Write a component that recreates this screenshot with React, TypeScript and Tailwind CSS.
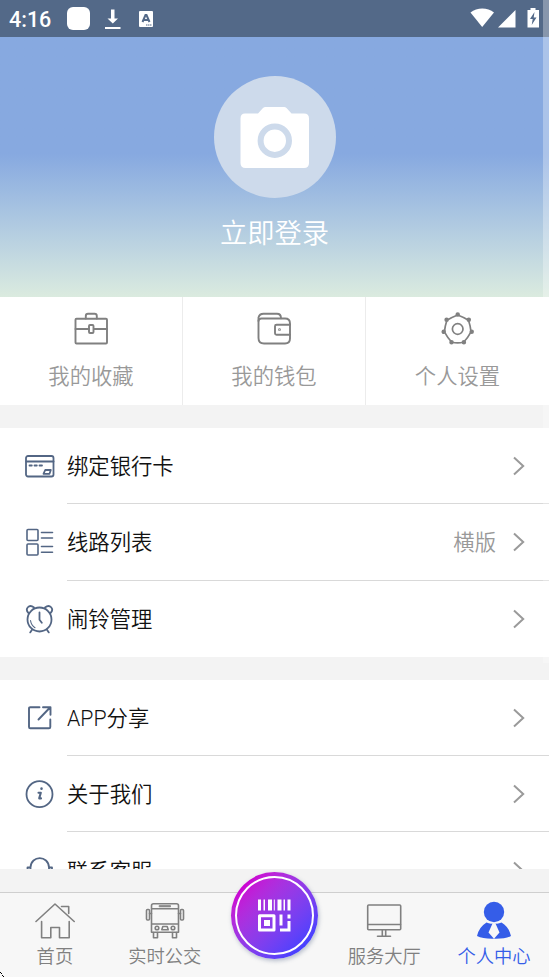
import type { ReactNode } from 'react';

const Svg = ({ w, h, sw = 1.6, children }: { w: number; h: number; sw?: number; children: ReactNode }) => (
  <svg
    width={w}
    height={h}
    viewBox={`0 0 ${w} ${h}`}
    fill="none"
    stroke="currentColor"
    strokeWidth={sw}
    strokeLinejoin="round"
    strokeLinecap="round"
    className="block shrink-0"
  >
    {children}
  </svg>
);

const StatusBar = () => (
  <div className="flex h-[37px] shrink-0 items-center bg-[#536988] text-white">
    <span className="ml-[9px] w-[58px] pt-0.5 font-[Roboto] text-[21.500px] font-medium leading-[35px]">4:16</span>
    <div className="h-[23px] w-[23px] rounded-[6px] bg-white" />
    <svg width="18" height="24" viewBox="0 0 18 24" className="ml-[14px]" fill="currentColor">
      <path d="M7 2.500h3.500v9H14l-5.200 5-5.300-5H7zM1 20h15.500v2H1z" />
    </svg>
    <svg width="16" height="18" viewBox="0 0 16 18" className="ml-4">
      <rect x="1" y="1" width="14" height="16" rx="1" fill="#fff" />
      <path d="M4.500 12L7.500 5h1L11.500 12M5.500 10h5" stroke="#536988" strokeWidth="2" fill="none" />
      <path d="M8 15h5.500" stroke="#536988" strokeDasharray="1.500 0.500" />
    </svg>
    <svg width="70" height="24" viewBox="0 0 70 24" className="ml-auto mr-[9px]" fill="currentColor">
      <path d="M0.500 5.500C7 0.200 17.500 0.200 24 5.500L12.200 20z" />
      <path d="M28 20.500L45.500 3V20.500z" />
      <path d="M57.500 3h3V1h5v2h3.500v17.500H57.500z" />
      <path d="M64.500 5l-4.500 7h2.700l-1 6 4.800-7.500h-2.800z" fill="#536988" />
    </svg>
  </div>
);

const CameraIcon = () => (
  <svg width="70" height="64" viewBox="0 0 70 64">
    <path
      d="M5 8.500H18L23 3Q24 2 25.500 2H44Q45.500 2 46.500 3L51.500 8.500H64Q69 8.500 69 13.500V58Q69 63 64 63H5.500Q0.500 63 0.500 58V13.500Q0.500 8.500 5 8.500z"
      fill="#fff"
    />
    <circle cx="34.800" cy="35.700" r="14.200" fill="none" stroke="#cddaeb" strokeWidth="6" />
  </svg>
);

const BriefcaseIcon = () => (
  <Svg w={36} h={36} sw={1.900}>
    <rect x="2.500" y="7.800" width="31.500" height="24.700" rx="1" />
    <path d="M12.800 7.500V5q0-2.200 2.200-2.200h6.600q2.200 0 2.200 2.200v2.500M2.500 18h13.500M21 18H34" />
    <rect x="16" y="14" width="4.500" height="8" rx="1" />
  </Svg>
);

const WalletIcon = () => (
  <Svg w={36} h={36} sw={1.900}>
    <path d="M2.500 9.500V27q0 5.500 5.500 5.500h21q5 0 5-5V12.500q0-5-5-5H5.500q-3 0-3 2.500z" />
    <path d="M2.500 10V6.500q1-3.700 5-3.700h13.500q4 0 4 4.500M34 13.700H20.500q-1.500 0-1.500 1.500v7q0 1.500 1.500 1.500H34" />
    <circle cx="23.500" cy="18.700" r="0.400" />
  </Svg>
);

const gearPoints = [
  [17.700, 3.500],
  [28.800, 8.800],
  [31.700, 20.800],
  [23.900, 31.300],
  [11.500, 31.300],
  [3.700, 20.800],
  [6.600, 8.800],
];

const GearIcon = () => (
  <Svg w={36} h={36} sw={1.700}>
    <path d="M17.700 4Q23 6 28.500 9.200Q30.500 15 31 20.800Q28 26.500 23.800 31Q17.700 32.800 11.600 31Q7.500 26.500 4.400 20.800Q5 15 6.900 9.200Q12.500 6 17.700 4z" />
    <circle cx="17.700" cy="18" r="5.300" />
    {gearPoints.map(([x, y]) => (
      <circle key={`${x}-${y}`} cx={x} cy={y} r="1.400" fill="currentColor" />
    ))}
  </Svg>
);

const CardIcon = () => (
  <Svg w={30} h={30} sw={1.800}>
    <rect x="1" y="5" width="27.500" height="20.500" rx="2" />
    <path d="M1.500 10.500h27" strokeWidth="1.900" />
    <path d="M4.500 14.500h2.300M9.500 14.500h2.300M14.500 14.500h2.500" />
    <path d="M20.200 19h5.600l-1.300 3.800h-6z" />
  </Svg>
);

const RoutesIcon = () => (
  <Svg w={30} h={30} sw={1.600}>
    <rect x="2" y="2.500" width="11" height="11" rx="1" />
    <rect x="2" y="17" width="11" height="11" rx="1" />
    <path d="M16.500 5.500h11M16.500 11h11M16.500 19.500h11M16.500 25.300h11" />
  </Svg>
);

const AlarmIcon = () => (
  <Svg w={30} h={30} sw={1.800}>
    <circle cx="14.500" cy="15.500" r="12" />
    <path d="M3.500 9C-0.500 5 4 -0.500 9 3.500M20 3.500C25 -0.500 29.500 5 25.500 9M7 25.800l-1.800 2.600M22 25.800l1.800 2.600M14.500 8.500v7.200l2.300 3" />
    <path d="M5.500 16.500q.8 5 4.500 7.200" strokeWidth="1.100" />
  </Svg>
);

const ShareIcon = () => (
  <Svg w={30} h={30} sw={1.900}>
    <path d="M14.500 4.200H5.300q-1.300 0-1.300 1.300v18.500q0 1.300 1.300 1.300h18.700q1.300 0 1.300-1.300V16.500M18 4.200h7.500v7.500M25 4.500L13.500 16.500" />
  </Svg>
);

const InfoIcon = () => (
  <Svg w={30} h={30} sw={1.800}>
    <circle cx="14.500" cy="15.200" r="13" />
    <path d="M16.500 9.500v.3" strokeWidth="2.500" />
    <path d="M13.500 13.800h2.300l-1.600 5.600h1.800" strokeWidth="2.100" />
  </Svg>
);

const HeadsetIcon = () => (
  <Svg w={30} h={30} sw={1.800}>
    <path d="M5.500 14V11.500C6 -1 23.500 -1 24 11.500V14M4.500 11.500H2.500V20h3v-8.500M25 11.500h2V20h-3v-8.500" />
  </Svg>
);

const HomeIcon = () => (
  <Svg w={40} h={40} sw={1.600}>
    <path d="M1 20.500L20 3l19.200 17.500M6.600 20.500v16.200h9.200V26.500h8.700v10.200h9.700V20.500M26.500 5.500h7.200v7" />
  </Svg>
);

const BusIcon = () => (
  <Svg w={40} h={40} sw={1.600}>
    <path d="M8.500 2.700h23q2 0 2 2v26.500h-27V4.700q0-2 2-2zM6.500 7.700h27M6.500 23h27" />
    <rect x="14.500" y="4.600" width="11" height="1.200" fill="currentColor" strokeWidth="0.800" />
    <rect x="1.500" y="8.500" width="3" height="10.500" rx="1" />
    <rect x="35.500" y="8.500" width="3" height="10.500" rx="1" />
    <circle cx="12" cy="27" r="1.800" />
    <circle cx="28" cy="27" r="1.800" />
    <path d="M17.800 25.500h4.400l1 3.200h-6.400zM8.500 31.500v5.200h4v-5.200M27.500 31.500v5.200h4v-5.200M4.500 12.500h2M33.500 12.500h2" />
  </Svg>
);

const MonitorIcon = () => (
  <Svg w={40} h={40} sw={1.600}>
    <rect x="3.700" y="4" width="33" height="24.700" rx="1" />
    <path d="M4 23.500h32.500M18.300 29v6M21.700 29v6M13.500 35.300h13" />
  </Svg>
);

const PersonIcon = () => (
  <svg width="40" height="40" viewBox="0 0 40 40" fill="currentColor">
    <circle cx="20" cy="11" r="10.200" />
    <path d="M12.500 21.500Q15.500 23 18.500 22.500L14.500 31.500L20 37.700Q9 38 3 35Q5 26 12.500 21.500z" />
    <path d="M27.500 21.500Q24.500 23 21.500 22.500L25.500 31.500L20 37.700Q31 38 37 35Q35 26 27.500 21.500z" />
  </svg>
);

const ScanIcon = () => (
  <svg width="33" height="33" viewBox="0 0 33 33" fill="#fff">
    <path d="M0 0.500h3v11H0zM5.500 0.500h1.500v11H5.500zM10 0.500h4v11h-4zM15.800 0.500h1v11h-1zM19.500 0.500h4v11h-4zM25.500 0.500h1.500v11h-1.500zM29.500 0.500h3v11h-3z" />
    <path d="M1.500 16.700h14.500v14.300h-14.500z" fill="none" stroke="#fff" strokeWidth="3" strokeLinejoin="round" />
    <path d="M6 21h6v6H6zM21.500 15.500h3v11h-3zM29.500 15.500h3v4h-3zM29.500 22h3v10.500h-10.500v-3h7.500z" />
  </svg>
);

const Chevron = () => (
  <svg width="12" height="20" viewBox="0 0 12 20" className="ml-[17px] mr-6" fill="none" stroke="#9a9a9a" strokeWidth="2">
    <path d="M1 1.500L10.200 10L1 18.500" />
  </svg>
);

const features = [
  { label: '我的收藏', icon: <BriefcaseIcon /> },
  { label: '我的钱包', icon: <WalletIcon /> },
  { label: '个人设置', icon: <GearIcon /> },
];

const cardItems = [
  { label: '绑定银行卡', icon: <CardIcon /> },
  { label: '线路列表', icon: <RoutesIcon />, value: '横版' },
  { label: '闹铃管理', icon: <AlarmIcon /> },
];

const aboutItems = [
  { label: 'APP分享', icon: <ShareIcon /> },
  { label: '关于我们', icon: <InfoIcon /> },
  { label: '联系客服', icon: <HeadsetIcon /> },
];

type Item = { label: string; icon: ReactNode; value?: string };

const List = ({ items }: { items: Item[] }) => (
  <div className="bg-white">
    {items.map((item, i) => (
      <div key={item.label} className="flex h-[76.300px] pl-[25px]">
        <div className="flex w-[42px] items-center text-[#536684]">{item.icon}</div>
        <div className={`flex flex-1 items-center ${i < items.length - 1 ? 'border-b border-[#d9d9d9]' : ''}`}>
          <span className="pt-[3px] text-[21.330px] leading-[30px] text-[#111]">{item.label}</span>
          <span className="ml-auto pt-[3px] text-[21.330px] leading-[30px] text-[#999]">{item.value}</span>
          <Chevron />
        </div>
      </div>
    ))}
  </div>
);

const Tab = ({ label, icon, active }: { label: string; icon: ReactNode; active?: boolean }) => (
  <div className={`flex flex-1 flex-col items-center pt-2 ${active ? 'text-[#355de8]' : 'text-[#808080]'}`}>
    {icon}
    <span className="mt-0.5 text-[18.300px] leading-[28px]">{label}</span>
  </div>
);

const TabBar = () => (
  <div className="relative flex h-[85px] shrink-0 border-t border-[#cfcfcf] bg-[#f7f7f7]">
    <Tab label="首页" icon={<HomeIcon />} />
    <Tab label="实时公交" icon={<BusIcon />} />
    <div className="flex-1" />
    <Tab label="服务大厅" icon={<MonitorIcon />} />
    <Tab label="个人中心" icon={<PersonIcon />} active />
    <div className="absolute -top-[21px] left-[231px] flex h-[87px] w-[87px] items-center justify-center rounded-full bg-linear-to-br from-[#cc00d2] from-15% to-[#4640ff] to-85% shadow-[1px_2px_4px_rgba(60,80,120,0.35)]">
      <div className="flex h-[79px] w-[79px] items-center justify-center rounded-full border-[2.500px] border-white">
        <ScanIcon />
      </div>
    </div>
  </div>
);

const App = () => {
  return (
    <div className="relative flex h-[977px] w-[549px] flex-col overflow-hidden bg-[#f3f3f3] font-[Roboto,'Noto_Sans_CJK_SC',sans-serif] font-[350]">
      <StatusBar />
      <div className="flex h-[260px] shrink-0 flex-col items-center bg-linear-to-b from-[#87a9e0] from-45% to-[#dbebdf] pt-[39px]">
        <div className="flex h-[122px] w-[122px] items-center justify-center rounded-full bg-[#cddaeb]">
          <CameraIcon />
        </div>
        <div className="mt-4 text-[27.300px] leading-[40px] text-white">立即登录</div>
      </div>
      <div className="grid h-[108px] shrink-0 grid-cols-3 divide-x divide-[#ececec] bg-white">
        {features.map((f) => (
          <div key={f.label} className="flex flex-col items-center pt-[14px] text-[#808080]">
            {f.icon}
            <span className="mt-[15px] text-[21.330px] leading-[30px] text-[#999]">{f.label}</span>
          </div>
        ))}
      </div>
      <div className="min-h-0 flex-1 overflow-hidden pt-[23px]">
        <List items={cardItems} />
        <div className="h-[23px]" />
        <List items={aboutItems} />
      </div>
      <div className="h-[23px] shrink-0" />
      <TabBar />
      {/* scroll indicator */}
      <div className="absolute right-0 top-0 h-[663px] w-[6px] bg-white/30" />
      <svg width="4" height="5" className="absolute bottom-0 left-0" fill="#000">
        <path d="M0 0h1v1H0zM1 1h1v1H1zM2 3h1v1H2zM3 4h1v1H3z" />
      </svg>
    </div>
  );
};

export default App;
